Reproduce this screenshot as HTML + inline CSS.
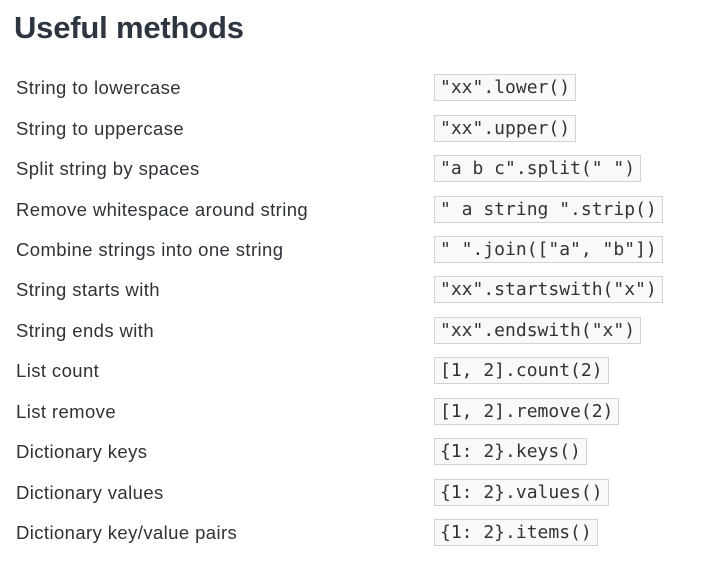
<!DOCTYPE html>
<html><head><meta charset="utf-8"><style>
body{margin:0;background:#fff;width:705px;height:570px;position:relative;overflow:hidden;font-family:"Liberation Sans",sans-serif;color:#2d3339}
h1{position:absolute;left:14px;top:10px;margin:0;font-size:31px;font-weight:bold;color:#2c3540;letter-spacing:-0.2px}
.r{position:absolute;left:0;height:27px;width:705px}
.l{position:absolute;left:16px;top:3px;font-size:18.5px;letter-spacing:0.4px;line-height:22px;color:#2e3338}
.c{position:absolute;left:434px;top:0;height:25px;line-height:25px;border:1px solid #d3d3d3;background:#f9f9f9;padding:0 5px;font-family:"DejaVu Sans Mono","Liberation Mono",monospace;font-size:18px;color:#333;white-space:pre}
</style></head><body>
<h1>Useful methods</h1>
<div class="r" style="top:74px"><span class="l">String to lowercase</span><span class="c">"xx".lower()</span></div>
<div class="r" style="top:115px"><span class="l">String to uppercase</span><span class="c">"xx".upper()</span></div>
<div class="r" style="top:155px"><span class="l">Split string by spaces</span><span class="c">"a b c".split(" ")</span></div>
<div class="r" style="top:196px"><span class="l">Remove whitespace around string</span><span class="c">" a string ".strip()</span></div>
<div class="r" style="top:236px"><span class="l">Combine strings into one string</span><span class="c">" ".join(["a", "b"])</span></div>
<div class="r" style="top:276px"><span class="l">String starts with</span><span class="c">"xx".startswith("x")</span></div>
<div class="r" style="top:317px"><span class="l">String ends with</span><span class="c">"xx".endswith("x")</span></div>
<div class="r" style="top:357px"><span class="l">List count</span><span class="c">[1, 2].count(2)</span></div>
<div class="r" style="top:398px"><span class="l">List remove</span><span class="c">[1, 2].remove(2)</span></div>
<div class="r" style="top:438px"><span class="l">Dictionary keys</span><span class="c">{1: 2}.keys()</span></div>
<div class="r" style="top:479px"><span class="l">Dictionary values</span><span class="c">{1: 2}.values()</span></div>
<div class="r" style="top:519px"><span class="l">Dictionary key/value pairs</span><span class="c">{1: 2}.items()</span></div>
</body></html>
